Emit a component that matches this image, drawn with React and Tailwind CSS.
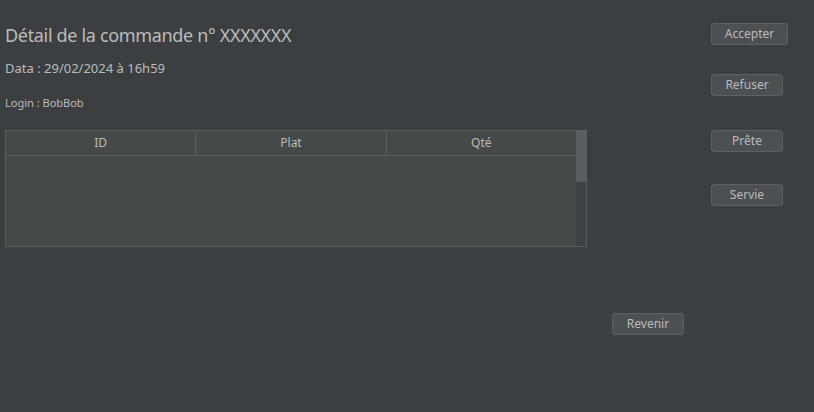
import React from "react";

const font = { fontFamily: '"Noto Sans", "Open Sans", sans-serif' };

function Btn({ label, w, extra = "" }) {
  return (
    <button
      className={`block h-[22px] ${w} ${extra} rounded-[3px] border border-[#5e6163] bg-[#4c5052] text-[12px] leading-none text-[#bbbbbb]`}
    >
      {label}
    </button>
  );
}

function App() {
  const cols = ["ID", "Plat", "Qté"];

  return (
    <div
      className="flex h-[412px] w-[814px] bg-[#3c3f41] text-[#bbbbbb]"
      style={font}
    >
      {/* left side: header texts, table, back button */}
      <div className="flex w-[684px] flex-col pl-[5px]">
        <h1 className="mt-[22px] h-[26px] text-[18px] leading-[26px] tracking-[-0.33px] text-[#bbbbbb]">
          Détail de la commande n° XXXXXXX
        </h1>
        <p className="mt-[11px] h-[18px] text-[13px] leading-[18px]">
          Data : 29/02/2024 à 16h59
        </p>
        <p className="mt-[18px] h-[16px] text-[11px] leading-[16px]">
          Login : BobBob
        </p>

        <div className="mt-[19px] flex h-[117px] w-[582px] border border-[#5b5e60] bg-[#45494a]">
          <div className="flex flex-1 flex-col">
            <div className="flex h-[25px] border-b border-[#5b5e60]">
              {cols.map((c, i) => (
                <div
                  key={c}
                  className={`flex flex-1 items-center justify-center text-[12px] ${
                    i < 2 ? "border-r border-[#5b5e60]" : ""
                  }`}
                >
                  {c}
                </div>
              ))}
            </div>
            <div className="flex-1" />
          </div>
          {/* scrollbar */}
          <div className="flex w-[10px] flex-col bg-[#3f4244]">
            <div className="h-[51px] bg-[#5a5d5f]" />
          </div>
        </div>

        <div className="mt-[66px] flex justify-end">
          <Btn label="Revenir" w="w-[72px]" />
        </div>
      </div>

      {/* right side: status buttons */}
      <div className="ml-[27px] flex flex-col items-start pt-[23px]">
        <Btn label="Accepter" w="w-[77px]" />
        <Btn label="Refuser" w="w-[72px]" extra="mt-[29px]" />
        <Btn label="Prête" w="w-[72px]" extra="mt-[34px]" />
        <Btn label="Servie" w="w-[72px]" extra="mt-[32px]" />
      </div>
    </div>
  );
}

export default App;
